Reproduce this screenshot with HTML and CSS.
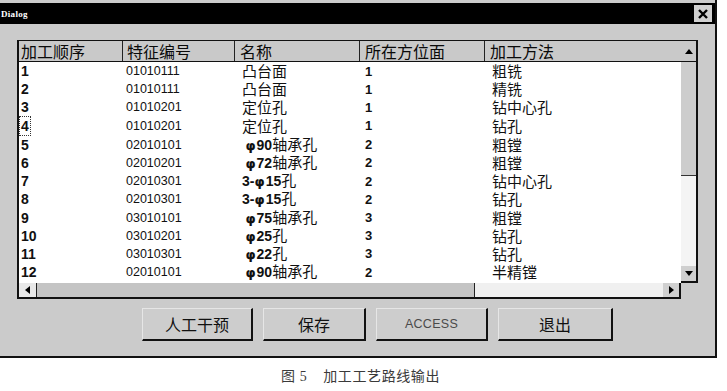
FILE: index.html
```html
<!DOCTYPE html>
<html lang="zh">
<head>
  <meta charset="UTF-8">
  <meta name="viewport" content="width=device-width, initial-scale=1.0">
  <title>Dialog</title>
  <link rel="stylesheet" href="styles.css">
</head>
<body>
  <div class="dialog">
    <div class="titlebar">
      <span class="title">Dialog</span>
      <span class="close">
        <svg width="10" height="10" viewBox="0 0 10 10"><path d="M1 1 L9 9 M9 1 L1 9" stroke="#000" stroke-width="2.4"/></svg>
      </span>
    </div>
    <div class="client">
      <div class="grid">
        <div class="table">
          <div class="row head">
            <div>加工顺序</div>
            <div>特征编号</div>
            <div>名称</div>
            <div>所在方位面</div>
            <div>加工方法</div>
          </div>
          <div class="row"><div class="num">1</div><div class="code">01010111</div><div class="name">凸台面</div><div class="side">1</div><div class="method">粗铣</div></div>
          <div class="row"><div class="num">2</div><div class="code">01010111</div><div class="name">凸台面</div><div class="side">1</div><div class="method">精铣</div></div>
          <div class="row"><div class="num">3</div><div class="code">01010201</div><div class="name">定位孔</div><div class="side">1</div><div class="method">钻中心孔</div></div>
          <div class="row"><div class="num"><span class="focus">4</span></div><div class="code">01010201</div><div class="name">定位孔</div><div class="side">1</div><div class="method">钻孔</div></div>
          <div class="row"><div class="num">5</div><div class="code">02010101</div><div class="name"> <b><i>φ</i>90</b>轴承孔</div><div class="side">2</div><div class="method">粗镗</div></div>
          <div class="row"><div class="num">6</div><div class="code">02010201</div><div class="name"> <b><i>φ</i>72</b>轴承孔</div><div class="side">2</div><div class="method">粗镗</div></div>
          <div class="row"><div class="num">7</div><div class="code">02010301</div><div class="name"><b>3-<i>φ</i>15</b>孔</div><div class="side">2</div><div class="method">钻中心孔</div></div>
          <div class="row"><div class="num">8</div><div class="code">02010301</div><div class="name"><b>3-<i>φ</i>15</b>孔</div><div class="side">2</div><div class="method">钻孔</div></div>
          <div class="row"><div class="num">9</div><div class="code">03010101</div><div class="name"> <b><i>φ</i>75</b>轴承孔</div><div class="side">3</div><div class="method">粗镗</div></div>
          <div class="row"><div class="num">10</div><div class="code">03010201</div><div class="name"> <b><i>φ</i>25</b>孔</div><div class="side">3</div><div class="method">钻孔</div></div>
          <div class="row"><div class="num">11</div><div class="code">03010301</div><div class="name"> <b><i>φ</i>22</b>孔</div><div class="side">3</div><div class="method">钻孔</div></div>
          <div class="row"><div class="num">12</div><div class="code">02010101</div><div class="name"> <b><i>φ</i>90</b>轴承孔</div><div class="side">2</div><div class="method">半精镗</div></div>
        </div>

        <div class="vscroll">
          <div class="arrow up"><svg width="8" height="5" viewBox="0 0 8 5"><polygon points="4,0 8,5 0,5" fill="#000"/></svg></div>
          <div class="thumb"></div>
          <div class="track"></div>
          <div class="arrow down"><svg width="8" height="5" viewBox="0 0 8 5"><polygon points="0,0 8,0 4,5" fill="#000"/></svg></div>
        </div>

        <div class="hscroll">
          <div class="arrow left"><svg width="5" height="8" viewBox="0 0 5 8"><polygon points="5,0 5,8 0,4" fill="#000"/></svg></div>
          <div class="thumb"></div>
          <div class="track"></div>
          <div class="arrow right"><svg width="5" height="8" viewBox="0 0 5 8"><polygon points="0,0 5,4 0,8" fill="#000"/></svg></div>
        </div>
      </div>

      <div class="buttons">
        <button class="btn btn-manual">人工干预</button>
        <button class="btn btn-save">保存</button>
        <button class="btn btn-access">ACCESS</button>
        <button class="btn btn-exit">退出</button>
      </div>
    </div>
  </div>
  <p class="caption">图 5<span class="gap"></span>加工工艺路线输出</p>
</body>
</html>
```

FILE: styles.css
```css
* { box-sizing: border-box; margin: 0; padding: 0; }
body {
  background: #fff;
  color: #111;
  font-family: "Noto Sans CJK SC", sans-serif;
  width: 727px;
}

/* окно диалога */
.dialog {
  width: 717px;
  padding-top: 3px;
  background-color: #cbcbcb;
  border-right: 2px solid #111;
  border-bottom: 2px solid #111;
}
.titlebar {
  height: 21px;
  background: #000;
  display: flex;
  justify-content: space-between;
  align-items: center;
  padding: 0 3px 0 1px;
}
.title { color: #fff; font-family: "Liberation Serif", serif; font-size: 9px; font-weight: bold; letter-spacing: 0.3px; }
.close {
  width: 18px;
  height: 17px;
  background: #d0d0d0;
  display: flex;
  align-items: center;
  justify-content: center;
}
.client { padding: 16px 0 15px 17px; }

/* таблица */
.grid {
  display: grid;
  grid-template-columns: 664px 17px;
  grid-template-rows: 243px 16px;
}
.table {
  background: #fff;
  border-left: 2px solid #111;
  border-top: 1px solid #111;
  overflow: hidden;
}
.row {
  display: grid;
  grid-template-columns: 104px 112px 125px 125px 1fr;
  height: 18.2px;
  align-items: center;
  white-space: pre;
}
.row.head {
  height: 21px;
  background: #c9c9c9;
  border-bottom: 1px solid #111;
  align-items: stretch;
  font-size: 16px;
  line-height: 20px;
  color: #0a0a0a;
}
.row.head div { border-right: 1px solid #222; padding-left: 3px; }
.row.head div:first-child { padding-left: 2px; }
.row.head div:nth-child(2) { padding-left: 4px; }
.row.head div:nth-child(3) { padding-left: 5px; }
.row.head div:nth-child(4) { padding-left: 5px; }
.row.head div:nth-child(5) { padding-left: 5px; border-right: none; }
.num { font-family: "Liberation Sans", Arial, sans-serif; font-weight: bold; font-size: 14px; padding-left: 2px; }
.focus { outline: 1px dotted #333; outline-offset: 1px; }
.code { font-family: "Liberation Sans", Arial, sans-serif; font-size: 12.5px; padding-left: 3px; }
.name { font-size: 15px; padding-left: 7px; line-height: 18px; }
.name b { font-family: "Liberation Sans", Arial, sans-serif; font-size: 14px; }
.name i { font-style: normal; font-family: "DejaVu Sans", sans-serif; font-size: 13px; margin-right: 1px; }
.side { font-family: "Liberation Sans", Arial, sans-serif; font-weight: bold; font-size: 13px; padding-left: 5px; }
.method { font-size: 15px; padding-left: 7px; line-height: 18px; }

/* полосы прокрутки */
.vscroll {
  display: flex;
  flex-direction: column;
  border-top: 1px solid #111;
  border-right: 2px solid #111;
  background: #f4f4f4;
}
.vscroll .arrow.up { height: 21px; background: #c9c9c9; border-bottom: 1px solid #111; }
.vscroll .thumb { height: 114px; background: #cdcdcd; border-bottom: 1px solid #333; }
.vscroll .track { flex: 1; }
.vscroll .arrow.down { height: 17px; background: #cfcfcf; border-bottom: 2px solid #111; margin-right: -2px; border-right: 2px solid #111; }
.arrow { display: flex; align-items: center; justify-content: center; }

.hscroll {
  display: flex;
  border-left: 2px solid #111;
  border-bottom: 2px solid #111;
  background: #f0f0f0;
}
.hscroll .arrow.left { width: 18px; background: #e8e8e8; border-right: 1px solid #222; }
.hscroll .thumb { width: 438px; background: #c4c4c4; border-right: 1px solid #222; }
.hscroll .track { flex: 1; }
.hscroll .arrow.right { width: 18px; background: #d0d0d0; border-right: 2px solid #111; }

/* кнопки */
.buttons {
  display: flex;
  gap: 10px;
  margin: 9px 0 0 125px;
}
.btn {
  height: 33px;
  background: #cdcdcd;
  border: none;
  border-top: 1px solid #e6e6e6;
  border-left: 1px solid #e6e6e6;
  border-right: 2px solid #111;
  border-bottom: 2px solid #111;
  font-family: "Noto Sans CJK SC", sans-serif;
  font-size: 16px;
  color: #111;
}
.btn-manual { width: 111px; }
.btn-save { width: 103px; }
.btn-access { width: 112px; font-family: "Liberation Sans", Arial, sans-serif; font-size: 12.5px; color: #4a4a4a; letter-spacing: 0.3px; }
.btn-exit { width: 115px; }

.caption {
  margin-top: 10px;
  text-align: center;
  padding-right: 6px;
  font-family: "Liberation Serif", "Noto Sans CJK SC", serif;
  font-size: 14px;
  line-height: 18px;
  color: #3a3a3a;
  letter-spacing: 0.6px;
}
.caption .gap { display: inline-block; width: 16px; }
```
